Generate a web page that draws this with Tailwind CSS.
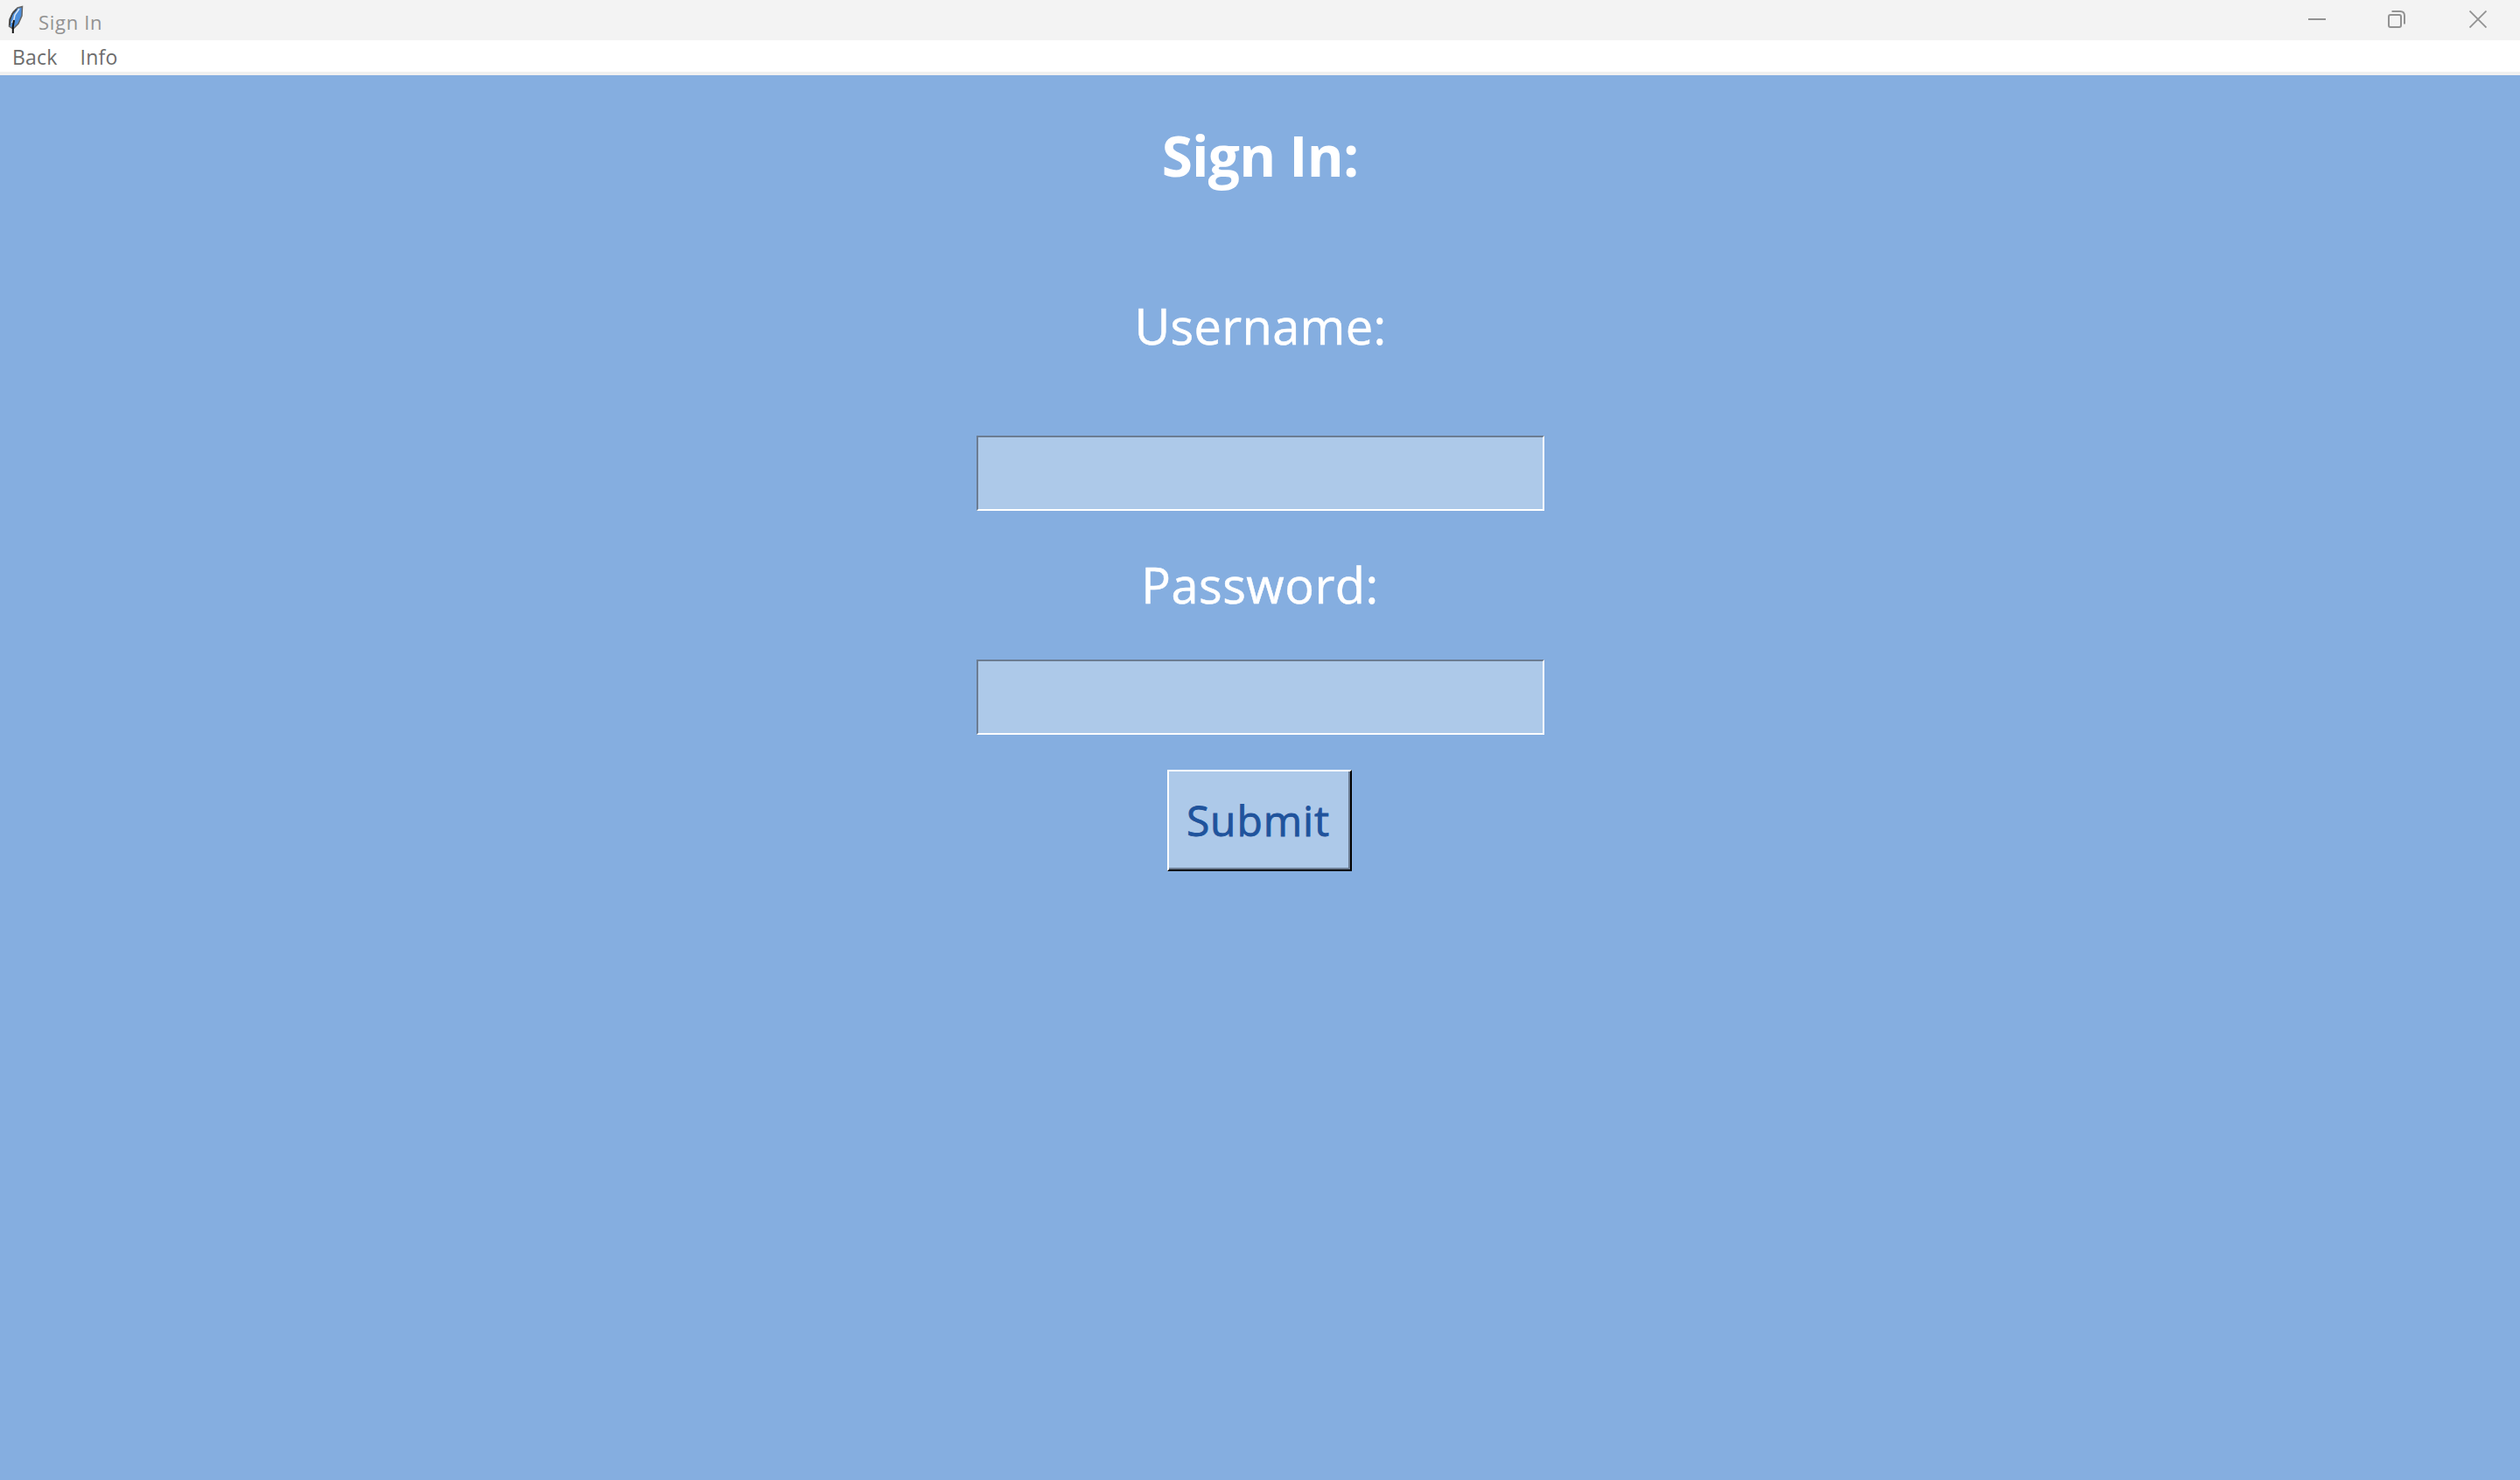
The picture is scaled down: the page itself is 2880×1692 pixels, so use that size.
<!DOCTYPE html>
<html lang="en">

<head>
  <meta charset="UTF-8" />
  <title>Sign In</title>
  <script src="https://cdn.jsdelivr.net/npm/@tailwindcss/browser@4"></script>
  <meta name="viewport" content="width=device-width, initial-scale=1.0" />
</head>

<body class="flex flex-col h-screen overflow-hidden bg-[#85aee0] font-['Open_Sans',sans-serif]">

  <header class="flex items-center justify-between h-[46px] shrink-0 bg-[#f3f3f3] text-[#929292]">
    <div class="flex items-center h-full">
      <svg class="w-10 h-[46px]" viewBox="0 0 40 46">
        <path d="M25.500 7.500 L20 9 L15 14 L11 22 L10.500 30 L15 33 L21 27 L25 18 Z" fill="#4d8fdc" stroke="#666" stroke-width="1.500" />
        <path d="M19 10.500 L14 16 L11.500 23 L11 29" fill="none" stroke="#444" stroke-width="1.500" />
        <path d="M22 10 L17 17 L16 22 L13.500 26" fill="none" stroke="#dbe8f6" stroke-width="1.5" />
        <path d="M16 23 L14.800 30 L14.800 38" fill="none" stroke="#111" stroke-width="2" />
      </svg>
      <span class="ml-1 pt-[3px] text-[22px] leading-none tracking-[0.7px]">Sign In</span>
    </div>
    <div class="flex items-center pr-[38px] pb-0.5">
      <svg class="w-5 h-5 mr-[71px]" viewBox="0 0 20 20"><path d="M0 10H20" stroke="#929292" stroke-width="2" /></svg>
      <svg class="w-5 h-5 mr-[73px]" viewBox="0 0 20 20" fill="none" stroke="#929292" stroke-width="2">
        <rect x="1" y="5" width="14" height="14" rx="2" />
        <path d="M4.500 1H14Q19 1 19 6V15.500" />
      </svg>
      <svg class="w-5 h-5" viewBox="0 0 20 20"><path d="M0.500 0.500L19.500 19.500M19.500 0.500L0.500 19.500" stroke="#929292" stroke-width="1.800" /></svg>
    </div>
  </header>

  <nav class="flex h-10 shrink-0 gap-[26px] pl-3.5 bg-white border-b-4 border-[#f0f0f0] text-[23px] leading-[38px] text-[#6d6d6d]">
    <span class="tracking-[0.2px]">Back</span>
    <span class="tracking-[0.2px]">Info</span>
  </nav>

  <main class="flex flex-col items-center text-white">
    <h1 class="mt-[48px] h-[88px] text-[64px] leading-[88px] font-bold tracking-[-0.8px]">Sign In:</h1>
    <label for="username" class="mt-[110px] h-20 pl-px text-[56px] leading-[80px] tracking-[0.3px] [-webkit-text-stroke:0.5px_white]">Username:</label>
    <input id="username" type="text"
      class="mt-[86px] w-[649px] h-[86px] bg-[#adc9e9] border-2 border-t-[#6b7c92] border-l-[#6b7c92] border-b-white border-r-white" />
    <label for="password" class="mt-11 h-20 text-[56px] leading-[80px] tracking-[0.5px] [-webkit-text-stroke:0.5px_white]">Password:</label>
    <input id="password" type="password"
      class="mt-[46px] w-[649px] h-[86px] bg-[#adc9e9] border-2 border-t-[#6b7c92] border-l-[#6b7c92] border-b-white border-r-white" />
    <button
      class="mt-10 mr-0.5 w-[211px] h-[116px] border-2 border-t-white border-l-white border-b-black border-r-black">
      <span class="flex items-center justify-center w-full h-full pt-0.5 bg-[#adc9e9] border-r-2 border-b-2 border-[#6b7c92] text-[#1f539c] text-[48px] tracking-[0.9px] [-webkit-text-stroke:0.8px_#1f539c]">Submit</span>
    </button>
  </main>
</body>

</html>
